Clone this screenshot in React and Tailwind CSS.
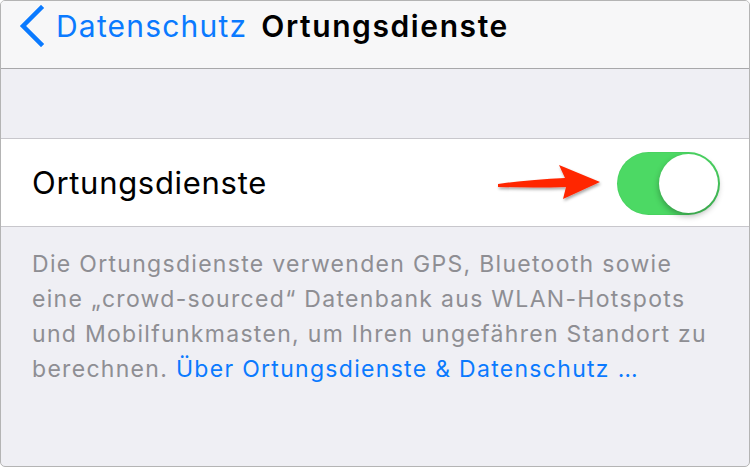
import React from "react";

export default function App() {
  return (
    <div className="w-[750px] h-[467px] bg-white">
      <div
        className="w-[750px] h-[467px] flex flex-col border border-[#b4b4b4] rounded-[5px] overflow-hidden bg-[#efeff4]"
        style={{ fontFamily: "Inter, 'Noto Sans', sans-serif" }}
      >
        {/* Nav bar */}
        <div className="h-[68px] shrink-0 bg-[#f7f7f8] border-b border-[#a8a8aa] flex items-start pt-[4px]">
          <div className="flex items-center h-[42px] pl-[16px]">
            <svg width="28" height="42" viewBox="0 0 28 42" className="shrink-0">
              <path d="M24 3 L6 21 L24 39" fill="none" stroke="#0a7aff" strokeWidth="4.5" strokeLinecap="square" strokeLinejoin="miter" />
            </svg>
            <span className="ml-[11px] text-[30px] text-[#0a7aff] leading-none tracking-[1.2px]">Datenschutz</span>
            <span className="ml-[14px] text-[30px] text-black font-semibold leading-none tracking-[1.6px]">Ortungsdienste</span>
          </div>
        </div>

        {/* gray spacer */}
        <div className="h-[70px] shrink-0 border-b border-[#c8c7cc]" />

        {/* row */}
        <div className="h-[88px] shrink-0 bg-white border-b border-[#c8c7cc] flex items-center pl-[31px] pr-[29px]">
          <span className="text-[31px] text-black leading-none flex-1 tracking-[0.7px]">Ortungsdienste</span>
          <div className="relative flex items-center pt-[2px]">
            <svg width="110" height="44" viewBox="0 0 110 44" className="mr-[12px]">
              <defs>
                <filter id="sh" x="-20%" y="-40%" width="140%" height="180%">
                  <feDropShadow dx="1" dy="2" stdDeviation="1.5" floodColor="#000" floodOpacity="0.35" />
                </filter>
              </defs>
              <path
                d="M3 22 Q40 17 70 16 L64 3 L105 20 L68 37 L71 25 Q40 26 3 25 Z"
                fill="#ff2600"
                filter="url(#sh)"
              />
            </svg>
            <div className="w-[103px] h-[63px] rounded-full bg-[#4cd964] relative shadow-[inset_0_0_0_1px_rgba(0,0,0,0.03)]">
              <div className="absolute right-[2px] top-[2px] w-[59px] h-[59px] rounded-full bg-white shadow-[0_3px_6px_rgba(0,0,0,0.3)]" />
            </div>
          </div>
        </div>

        {/* footer text */}
        <div className="px-[31px] pt-[20px] text-[23px] leading-[35px] text-[#8e8e93] tracking-[1.3px]">
          Die Ortungsdienste verwenden GPS, Bluetooth sowie
          <br />
          eine „crowd-sourced“ Datenbank aus WLAN-Hotspots
          <br />
          und Mobilfunkmasten, um Ihren ungefähren Standort zu
          <br />
          berechnen. <span className="text-[#0a7aff]">Über Ortungsdienste &amp; Datenschutz …</span>
        </div>
      </div>
    </div>
  );
}
